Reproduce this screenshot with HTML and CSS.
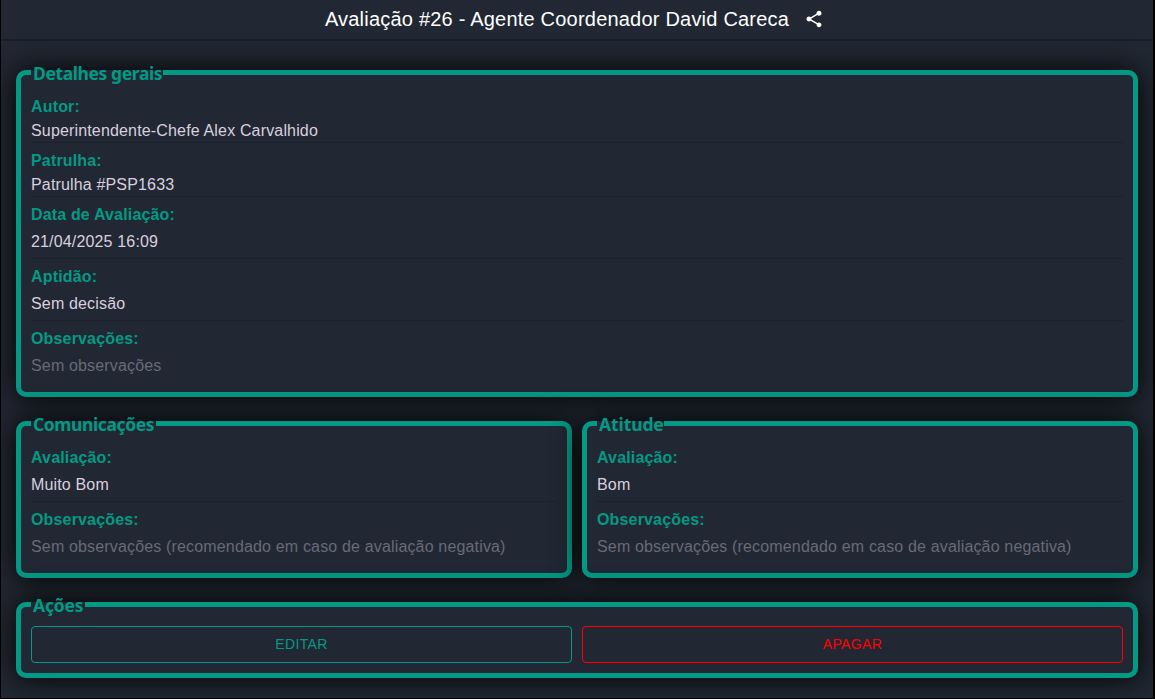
FILE: index.html
```html
<!DOCTYPE html>
<html lang="pt">
<head>
<meta charset="utf-8">
<title>Avaliação #26</title>
<link rel="stylesheet" href="styles.css">
</head>
<body>
<div class="window">
  <header class="header">
    <h1 class="title">Avaliação #26 - Agente Coordenador David Careca</h1>
    <svg class="share" viewBox="0 0 24 24"><path d="M18 16.08c-.76 0-1.44.3-1.96.77L8.91 12.7c.05-.23.09-.46.09-.7s-.04-.47-.09-.7l7.05-4.11c.54.5 1.25.81 2.04.81 1.66 0 3-1.34 3-3s-1.34-3-3-3-3 1.34-3 3c0 .24.04.47.09.7L8.04 9.81C7.5 9.31 6.79 9 6 9c-1.66 0-3 1.34-3 3s1.34 3 3 3c.79 0 1.5-.31 2.04-.81l7.12 4.16c-.05.21-.08.43-.08.65 0 1.61 1.31 2.92 2.92 2.92s2.92-1.31 2.92-2.92-1.31-2.92-2.92-2.92z"/></svg>
  </header>
  <main class="content">
    <fieldset class="panel">
      <legend class="legend legend-general">Detalhes gerais</legend>
      <div class="row compact"><div class="label">Autor:</div><div class="value">Superintendente-Chefe Alex Carvalhido</div></div>
      <div class="row compact"><div class="label">Patrulha:</div><div class="value">Patrulha #PSP1633</div></div>
      <div class="row"><div class="label">Data de Avaliação:</div><div class="value">21/04/2025 16:09</div></div>
      <div class="row"><div class="label">Aptidão:</div><div class="value">Sem decisão</div></div>
      <div class="row last"><div class="label">Observações:</div><div class="value muted">Sem observações</div></div>
    </fieldset>
    <div class="pair">
      <fieldset class="panel">
        <legend class="legend legend-comms">Comunicações</legend>
        <div class="row"><div class="label">Avaliação:</div><div class="value">Muito Bom</div></div>
        <div class="row last"><div class="label">Observações:</div><div class="value muted">Sem observações (recomendado em caso de avaliação negativa)</div></div>
      </fieldset>
      <fieldset class="panel">
        <legend class="legend legend-attitude">Atitude</legend>
        <div class="row"><div class="label">Avaliação:</div><div class="value">Bom</div></div>
        <div class="row last"><div class="label">Observações:</div><div class="value muted">Sem observações (recomendado em caso de avaliação negativa)</div></div>
      </fieldset>
    </div>
    <fieldset class="panel">
      <legend class="legend legend-actions">Ações</legend>
      <div class="actions">
        <button class="btn">EDITAR</button>
        <button class="btn danger">APAGAR</button>
      </div>
    </fieldset>
  </main>
</div>
</body>
</html>
```
FILE: styles.css
```css
* { box-sizing: border-box; }
body {
  margin: 0;
  background: #000;
  font: 16px/24px "Liberation Sans", Arial, sans-serif;
  letter-spacing: 0.16px;
  color: #d9cfdf;
}
.window {
  height: 699px;
  border: solid #000;
  border-width: 0 2px 1px 1px;
  background: #212833;
  overflow: hidden;
}
.header {
  height: 41px;
  display: flex;
  justify-content: center;
  align-items: center;
  gap: 15px;
  padding-bottom: 1px;
  padding-right: 5px;
  border-bottom: 2px solid #191f28;
  color: #fff;
}
.title {
  margin: 0;
  font-size: 20px;
  font-weight: 400;
  line-height: 24px;
  letter-spacing: 0.21px;
}
.share { width: 20px; height: 20px; fill: #fff; }
.content {
  display: flex;
  flex-direction: column;
  gap: 14px;
  padding: 19px 15px 0;
}
.panel {
  min-width: 0;
  margin: 0;
  padding: 10px 10px 11px;
  border: 5px solid #049985;
  border-radius: 10px;
  background: #212833;
  box-shadow: 0 0 30px #000;
}
.legend {
  height: 25px;
  padding: 1px 2px 0;
  font: bold 17.5px/25px "Noto Sans", sans-serif;
  letter-spacing: -0.4px;
  color: #049985;
  white-space: nowrap;
}
.legend-general { width: 132px; }
.legend-comms { width: 125px; }
.legend-attitude { width: 67px; letter-spacing: -0.1px; }
.legend-actions { width: 54px; letter-spacing: -0.2px; }
.row {
  padding-bottom: 1px;
  margin-bottom: 6px;
  border-bottom: 1px solid #1c222c;
}
.compact { padding-bottom: 0; }
.compact .value { line-height: 24px; height: 23px; }
.last { padding: 0; margin: 0; border: 0; }
.label { font-weight: bold; color: #049985; }
.value { line-height: 30px; white-space: nowrap; }
.muted { color: #686a77; }
.pair { display: grid; grid-template-columns: 1fr 1fr; gap: 10px; }
.actions {
  display: grid;
  grid-template-columns: 1fr 1fr;
  gap: 10px;
  margin: -1px 0;
}
.btn {
  height: 37px;
  padding: 0 0 2px;
  border: 1px solid #049985;
  border-radius: 4px;
  background: transparent;
  color: #049985;
  font: 14px "Liberation Sans", Arial, sans-serif;
  letter-spacing: 0.4px;
}
.danger { border-color: #f00; color: #f00; }
```
